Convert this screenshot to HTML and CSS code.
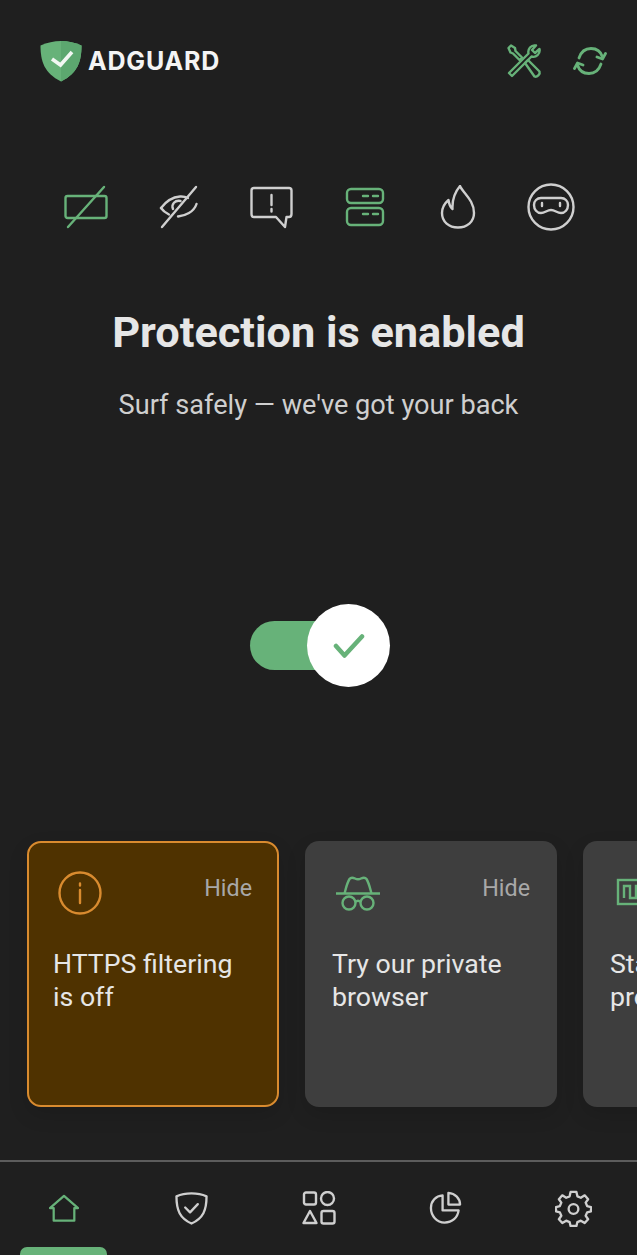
FILE: index.html
```html
<!DOCTYPE html>
<html lang="en">
<head>
    <meta charset="UTF-8">
    <meta name="viewport" content="width=device-width, initial-scale=1.0">
    <title>AdGuard</title>
    <link rel="stylesheet" href="styles.css">
</head>
<body>
    <div class="screen">
        <header class="top-bar">
            <div class="logo">
                <svg class="logo-shield" width="42" height="42" viewBox="0 0 42 42">
                    <path d="M21 1C14 1 7 2.500 0.500 5.500C0.500 21 4 33 21 41.500C38 33 41.500 21 41.500 5.500C35 2.500 28 1 21 1Z" fill="#67b279"/>
                    <path d="M21 1C28 1 35 2.500 41.500 5.500C41.500 21 38 33 21 41.500Z" fill="#5ca76f"/>
                    <path d="M12 19L20.500 25L32 12" fill="none" stroke="#f2f7f3" stroke-width="3.600"/>
                </svg>
                <span class="logo-text">ADGUARD</span>
            </div>
            <div class="top-actions">
                <svg width="36" height="36" viewBox="0 0 36 36" fill="none" stroke="#67b279" stroke-width="2.400" stroke-linejoin="round">
                    <path d="M3 30L22.500 10.500C21.500 6 25 1.500 30 2.500L26 7L29 10L33.500 6C34.500 11 30 15 25.500 13.500L6 33Z"/>
                    <path d="M2.500 5L5 2.500L9 5L9.500 8L16 14.500L13.500 17L7 10.500L4.500 9.500Z"/>
                    <path d="M19 20L22 17L33.500 28.500C34.500 31 31 34.500 28.500 33.500Z"/>
                </svg>
                <svg width="34" height="30" viewBox="0 0 34 30" fill="none" stroke="#67b279" stroke-width="2.800" stroke-linecap="round" stroke-linejoin="round">
                    <path d="M6 12C8 6 12 2.500 18 2.500C24 2.500 28 6 29.500 11"/>
                    <path d="M28 18C26 24 22 27.500 16 27.500C10 27.500 6 24 4.500 19"/>
                    <path d="M24 11L29.500 13L32.500 7.500"/>
                    <path d="M10 19L4.500 17L1.500 22.500"/>
                </svg>
            </div>
        </header>

        <div class="feature-icons">
            <svg width="44" height="44" viewBox="0 0 44 44" fill="none" stroke="#67b279" stroke-width="2.400">
                <rect x="1.500" y="11" width="41" height="22" rx="2"/>
                <path d="M40 2L4 42" stroke-linecap="round"/>
            </svg>
            <svg width="40" height="44" viewBox="0 0 40 44" fill="none" stroke="#cfcfcf" stroke-width="2.400" stroke-linecap="round">
                <path d="M2 23C8 15 15 12 21 11.500C24 11.300 27 12 29 13M37.500 19C35 27 26 31 19 31.500"/>
                <path d="M2 23C4 26 7 28 10 29.500"/>
                <path d="M14 24C12 19 16 15 21.500 16"/>
                <path d="M37 2L3 42"/>
            </svg>
            <svg width="44" height="44" viewBox="0 0 44 44" fill="none" stroke="#cfcfcf" stroke-width="2.400" stroke-linejoin="round">
                <path d="M4 3H39C40.500 3 41.500 4 41.500 5.500V29C41.500 31 40.500 32 39 32H36.500L35 42L26 32H4C2.500 32 1.500 31 1.500 29V5.500C1.500 4 2.500 3 4 3Z"/>
                <path d="M21.500 10V20M21.500 24V26.500" stroke-linecap="round"/>
            </svg>
            <svg width="40" height="40" viewBox="0 0 40 40" fill="none" stroke="#67b279" stroke-width="2.400">
                <rect x="2" y="2" width="36" height="14" rx="4"/>
                <rect x="2" y="21" width="36" height="17" rx="4"/>
                <path d="M18 9H23M28 9H33M18 27H23M28 27H33" stroke-linecap="round"/>
            </svg>
            <svg width="36" height="44" viewBox="0 0 36 44" fill="none" stroke="#cfcfcf" stroke-width="2.400" stroke-linejoin="round">
                <path d="M20 1C23 8 34 15 34 28C34 37 27 42.500 18 42.500C9 42.500 2 37 2 28C2 22 5 18 8.500 15C9 19 10 22 12.500 24C12 15 15 7 20 1Z"/>
            </svg>
            <svg width="48" height="48" viewBox="0 0 48 48" fill="none" stroke="#cfcfcf" stroke-width="2.400">
                <circle cx="24" cy="24" r="22.500"/>
                <path d="M14 15H34C38 15 41 18 41 22C41 26.500 38 30 34 30C30 30 28 27 24 27C20 27 18 30 14 30C10 30 7 26.500 7 22C7 18 10 15 14 15Z"/>
                <path d="M15 20V23M33 20V23" stroke-linecap="round"/>
            </svg>
        </div>

        <h1 class="title">Protection is enabled</h1>
        <p class="subtitle">Surf safely — we've got your back</p>

        <div class="toggle-row">
            <div class="toggle">
                <div class="toggle-knob">
                    <svg width="32" height="26" viewBox="0 0 32 26" fill="none" stroke="#67b279" stroke-width="4.500" stroke-linecap="round" stroke-linejoin="round">
                        <path d="M3 13L11.500 22.500L29 3.500"/>
                    </svg>
                </div>
            </div>
        </div>

        <div class="cards">
            <div class="card card-warning">
                <div class="card-head">
                    <svg class="card-icon" width="44" height="44" viewBox="0 0 44 44" fill="none" stroke="#d98b2f" stroke-width="2.400">
                        <circle cx="22" cy="22" r="20.500"/>
                        <path d="M22 19V32M22 12.500V14.500" stroke-linecap="round"/>
                    </svg>
                    <span class="card-hide">Hide</span>
                </div>
                <div class="card-text">HTTPS filtering<br>is off</div>
            </div>
            <div class="card">
                <div class="card-head">
                    <svg class="card-icon card-icon-line" width="46" height="36" viewBox="0 0 46 36" fill="none" stroke="#67b279" stroke-width="2.400">
                        <path d="M1 18.500H45"/>
                        <path d="M9.500 18.500C11 13 12 8 14.500 4C16 2 18 2.500 20 3.500C22 4.500 24 4.500 26 3.500C28 2.500 30 2 31.500 4C34 8 35 13 36.500 18.500"/>
                        <circle cx="14" cy="28" r="6.500"/>
                        <circle cx="32" cy="28" r="6.500"/>
                        <path d="M20.500 27C22 25.500 24 25.500 25.500 27"/>
                    </svg>
                    <span class="card-hide">Hide</span>
                </div>
                <div class="card-text">Try our private<br>browser</div>
            </div>
            <div class="card">
                <div class="card-head">
                    <svg class="card-icon card-icon-line" width="46" height="36" viewBox="0 0 46 36" fill="none" stroke="#67b279" stroke-width="2.400">
                        <rect x="5" y="5" width="40" height="24"/>
                        <path d="M11 23V11H17V23H23V11H29V23H35V11H40"/>
                    </svg>
                </div>
                <div class="card-text">Start<br>protection</div>
            </div>
        </div>

        <nav class="bottom-nav">
            <div class="nav-item">
                <svg width="30" height="29" viewBox="0 0 32 30" fill="none" stroke="#67b279" stroke-width="2.400" stroke-linejoin="round">
                    <path d="M1 14.500L16 1.500L31 14.500H27V28H5V14.500Z"/>
                </svg>
            </div>
            <div class="nav-item">
                <svg width="33" height="33" viewBox="0 0 34 34" fill="none" stroke="#cfcfcf" stroke-width="2.400" stroke-linejoin="round">
                    <path d="M17 1.500C11 1.500 6 2.500 1.500 4.500C1.500 19 5 27 17 32.500C29 27 32.500 19 32.500 4.500C28 2.500 23 1.500 17 1.500Z"/>
                    <path d="M10.500 16L15.500 21L23.500 12.500" stroke-linecap="round"/>
                </svg>
            </div>
            <div class="nav-item">
                <svg width="34" height="34" viewBox="0 0 34 34" fill="none" stroke="#cfcfcf" stroke-width="2.400" stroke-linejoin="round">
                    <rect x="2" y="1.500" width="12" height="12" rx="2"/>
                    <circle cx="25.500" cy="7.500" r="6.500"/>
                    <path d="M8 20L14.500 32H1.500Z"/>
                    <rect x="19.500" y="20" width="13" height="12.500" rx="2"/>
                </svg>
            </div>
            <div class="nav-item">
                <svg width="33" height="34" viewBox="0 0 34 34" fill="none" stroke="#cfcfcf" stroke-width="2.400" stroke-linejoin="round">
                    <path d="M14 4C7 4.500 2 10 2 17C2 25 8 32 16 32C24 32 29.500 27 30.500 19.500H14Z"/>
                    <path d="M20 1.500V13.500H32C32 7 27 2 20 1.500Z"/>
                </svg>
            </div>
            <div class="nav-item">
                <svg width="37" height="37" viewBox="0 0 38 38" fill="none" stroke="#cfcfcf" stroke-width="2.400" stroke-linejoin="round">
                    <path d="M16 2H22L23 6.500L26.500 8L30.500 5.500L34 9.500L31.500 13L33 16.500L37 17.500V22L33 23L31.500 26.500L34 30L30.500 34L26.500 31.500L23 33L22 37H16L15 33L11.500 31.500L7.500 34L4 30L6.500 26.500L5 23L1 22V17.500L5 16.500L6.500 13L4 9.500L7.500 5.500L11.500 8L15 6.500Z"/>
                    <circle cx="19" cy="19.500" r="5"/>
                </svg>
            </div>
            <div class="nav-pill"></div>
        </nav>
    </div>
</body>
</html>
```

FILE: styles.css
```css
* { box-sizing: border-box; }
html, body { margin: 0; padding: 0; }
body { background-color: #1f1f1f; color: #e3e3e3; font-family: Roboto, "Liberation Sans", sans-serif; }
svg { display: block; flex: none; }

.screen { width: 637px; height: 1255px; overflow: hidden; display: flex; flex-direction: column; }

.top-bar { display: flex; align-items: center; justify-content: space-between; padding: 40px 30px 0 40px; height: 82px; }
.logo { display: flex; align-items: center; gap: 6px; }
.logo-text { font-family: "Inter", sans-serif; font-weight: 700; font-size: 25px; letter-spacing: 0.8px; color: #f4f4f4; }
.top-actions { display: flex; align-items: center; gap: 31px; }

.feature-icons { display: grid; grid-template-columns: repeat(6, 93px); justify-items: center; align-items: center; height: 52px; margin-top: 99px; padding-left: 39px; }

.title { margin: 75px 0 0; font-size: 43.300px; line-height: 50px; font-weight: 700; text-align: center; color: #e6e6e6; }
.subtitle { margin: 29px 0 0; font-size: 27.150px; line-height: 36px; text-align: center; color: #cfcfcf; }

.toggle-row { display: flex; justify-content: center; margin-top: 198px; padding-left: 2px; }
.toggle { position: relative; width: 139px; height: 49px; }
.toggle::before { content: ""; display: block; width: 100px; height: 49px; border-radius: 25px; background-color: #67b279; }
.toggle-knob { position: absolute; left: 57px; top: -17px; width: 83px; height: 83px; border-radius: 50%; background-color: #fff; display: flex; align-items: center; justify-content: center; }

.cards { display: flex; gap: 26.500px; margin-top: 171px; padding-left: 27px; }
.card { flex: none; width: 251.500px; height: 266px; border-radius: 14px; background-color: #3e3e3e; padding: 26px 26.500px 0 27px; box-shadow: 0 8px 20px rgba(0, 0, 0, 0.12); }
.card-warning { background-color: #4f3200; border: 2px solid #d98b2f; padding: 24px 24.500px 0 24px; }
.card-head { display: flex; justify-content: space-between; align-items: flex-start; height: 56px; }
.card-warning .card-icon { margin: 4px 0 0 5px; }
.card-icon-line { margin: 8px 0 0 3px; }
.card-hide { font-size: 23.300px; line-height: 30px; margin-top: 6px; color: #a8a8a8; }
.card-text { margin-top: 25px; font-size: 26.700px; line-height: 33px; color: #e6e6e6; }

.bottom-nav { position: relative; display: flex; align-items: center; margin-top: 53px; height: 94px; border-top: 2px solid #5c5c5c; }
.nav-item { flex: 1; height: 92px; display: flex; align-items: center; justify-content: center; }
.nav-pill { position: absolute; left: 20px; top: 85px; width: 87px; height: 12px; border-radius: 7px 7px 0 0; background-color: #67b279; }
```
